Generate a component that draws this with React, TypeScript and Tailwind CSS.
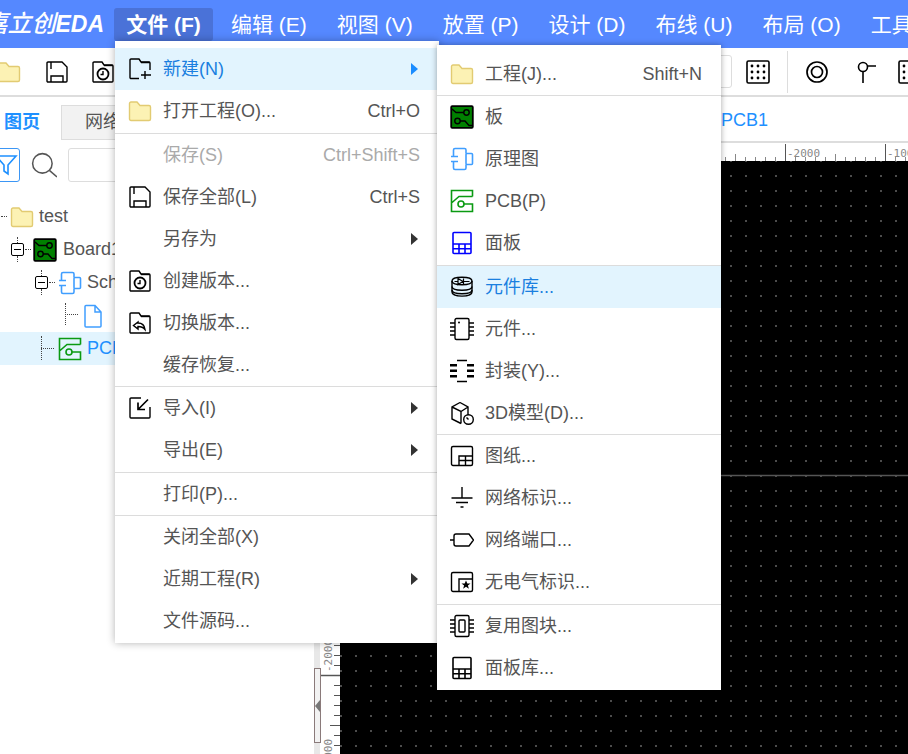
import React from "react";

const Svg = ({ children, className = "" }: { children: React.ReactNode; className?: string }) => (
  <svg viewBox="0 0 24 24" width="24" height="24" fill="none" stroke="#000" strokeWidth="1.4" className={"shrink-0 " + className}>
    {children}
  </svg>
);

const FolderIcon = () => (
  <Svg>
    <path d="M1.500 4.500a1.500 1.500 0 0 1 1.500-1.500h6l3 3.500h9a1.500 1.500 0 0 1 1.500 1.500v12a1.500 1.500 0 0 1-1.500 1.500H3a1.500 1.500 0 0 1-1.500-1.500z" fill="#fcf2b4" stroke="#e2cb72" />
  </Svg>
);
const SaveIcon = () => (
  <Svg>
    <path d="M3 2h14l5 5v14a1 1 0 0 1-1 1H3a1 1 0 0 1-1-1V3a1 1 0 0 1 1-1z" />
    <path d="M6 2v7M6 22v-6h12v6" />
  </Svg>
);
const NewIcon = () => (
  <Svg>
    <path d="M11 21.500H3a1 1 0 0 1-1-1V3a1 1 0 0 1 1-1h8l2 3h8a1 1 0 0 1 1 1v7" />
    <path d="M13 5.500h9M17 14v8M13 18h10" />
  </Svg>
);
const HistoryIcon = () => (
  <Svg>
    <path d="M3 2h8l2 3h8a1 1 0 0 1 1 1v15a1 1 0 0 1-1 1H3a1 1 0 0 1-1-1V3a1 1 0 0 1 1-1z" />
    <path d="M13 5.500h9" />
    <circle cx="12" cy="14" r="5.500" strokeWidth="1.800" />
    <path d="M12 11v3.500h-2.500" />
  </Svg>
);
const SwitchIcon = () => (
  <Svg>
    <path d="M3 2h8l2 3h8a1 1 0 0 1 1 1v15a1 1 0 0 1-1 1H3a1 1 0 0 1-1-1V3a1 1 0 0 1 1-1z" />
    <path d="M13 5.500h9" />
    <path d="M10 11l-4.500 3.500 4.500 3.500v-2.500c3 0 5 .5 7 3-.5-4-3-6.500-7-6.500z" />
  </Svg>
);
const ImportIcon = () => (
  <Svg>
    <path d="M13 2H3a1 1 0 0 0-1 1v18a1 1 0 0 0 1 1h18a1 1 0 0 0 1-1V11" />
    <path d="M20 3.500L10 13.500M10 6.500v7h7" strokeWidth="1.700" />
  </Svg>
);
const BoardIcon = () => (
  <Svg>
    <rect x="1.200" y="1.200" width="21.600" height="21.600" rx="1" fill="#008000" strokeWidth="1.800" />
    <path d="M2 4l4 3.500h8M10 16h5l4 4.500h3.500" />
    <circle cx="16.500" cy="7.500" r="2.700" />
    <circle cx="7.500" cy="16" r="2.700" />
  </Svg>
);
const SchIcon = () => (
  <Svg>
    <g stroke="#409eff" strokeWidth="1.600">
      <path d="M16 6.500V3a1.500 1.500 0 0 0-1.500-1.500H5A1.500 1.500 0 0 0 3.500 3v6.500M1 9.500h7M1 14.500h7M3.500 14.500V21A1.500 1.500 0 0 0 5 22.500h9.500A1.500 1.500 0 0 0 16 21v-3.500" />
      <rect x="16" y="6.500" width="6.500" height="11" rx="1" />
    </g>
  </Svg>
);
const PcbIcon = () => (
  <Svg>
    <g stroke="#0a9a12" strokeWidth="1.600">
      <path d="M22.500 7.500v-6H1.500v21h21V15H14M22.500 7.500H9L1.500 14" />
      <circle cx="11" cy="15" r="3" />
    </g>
  </Svg>
);
const PanelIcon = ({ c = "#0000ff" }: { c?: string }) => (
  <Svg>
    <g stroke={c} strokeWidth="1.600">
      <rect x="3" y="1.500" width="18" height="21" rx="1" />
      <path d="M3 13h18M3 17.700h18M9 13v9.500M15 13v9.500" />
    </g>
  </Svg>
);
const LibIcon = () => (
  <Svg>
    <path d="M2 6c0-5 20-5 20 0v11c0 5.500-20 5.500-20 0z" />
    <path d="M2 6c0 5 20 5 20 0M2 11.500c0 5 20 5 20 0M2 15c0 5 20 5 20 0" />
    <path d="M8 3.500l5 3-5 3zM13.500 3.500v6M4.500 6.500H8M13.500 6.500h6" strokeWidth="1.200" />
  </Svg>
);
const ChipIcon = () => (
  <Svg>
    <rect x="5" y="1.500" width="14" height="21" rx="1.500" />
    <circle cx="9" cy="5.500" r="1" fill="#000" stroke="none" />
    <path d="M0 6h5M0 10h5M0 14h5M0 18h5M19 6h5M19 10h5M19 14h5M19 18h5" />
  </Svg>
);
const FootprintIcon = () => (
  <Svg>
    <g fill="#000" stroke="none">
      <rect x="0" y="5" width="7" height="2.500" />
      <rect x="0" y="10.500" width="7" height="2.500" />
      <rect x="0" y="16" width="7" height="2.500" />
      <rect x="17" y="5" width="7" height="2.500" />
      <rect x="17" y="10.500" width="7" height="2.500" />
      <rect x="17" y="16" width="7" height="2.500" />
    </g>
    <path d="M7 1.500h10M7 22.500h10" />
  </Svg>
);
const Model3dIcon = () => (
  <Svg>
    <path d="M10 1.500l8 4.500v8M10 1.500L2 6v12l9 4.500M2 6l9 4.500 7-4.500M11 10.500v12" />
    <circle cx="18.500" cy="18.500" r="4.800" fill="#fff" />
    <path d="M18.500 18.500l-2-2" />
  </Svg>
);
const SheetIcon = () => (
  <Svg>
    <rect x="1.500" y="2.500" width="21" height="19" rx="1.500" />
    <path d="M9 21.500V12h13.500M9 16.500h13.500M15.500 12v9.500" />
  </Svg>
);
const NetFlagIcon = () => (
  <Svg>
    <path d="M12 1v11M1.500 12h21M6 16.500h12M10.500 21h3" />
  </Svg>
);
const NetPortIcon = () => (
  <Svg>
    <path d="M0 12h4M6 6h13l4.500 6-4.500 6H6a2 2 0 0 1-2-2V8a2 2 0 0 1 2-2z" />
  </Svg>
);
const NoErcIcon = () => (
  <Svg>
    <rect x="1.500" y="2.500" width="21" height="19" rx="1.500" />
    <path d="M9 21.500V9h13.500" />
    <path d="M16 10.500l1.300 3h3.200l-2.600 2 1 3.200-2.900-1.900-2.900 1.900 1-3.200-2.600-2h3.200z" fill="#000" stroke="none" />
  </Svg>
);
const BlockIcon = () => (
  <Svg>
    <rect x="5" y="1.500" width="14" height="21" rx="1.500" />
    <rect x="9" y="6" width="6" height="12" rx="1" />
    <path d="M0 6h5M0 10h5M0 14h5M0 18h5M19 6h5M19 10h5M19 14h5M19 18h5" />
  </Svg>
);
const DotsIcon = () => (
  <Svg>
    <rect x="1" y="1" width="22" height="22" rx="1.500" strokeWidth="1.600" />
    <g fill="#000" stroke="none">
      {[6, 12, 18].map((x) =>
        [6, 12, 18].map((y) => <circle key={x + "-" + y} cx={x} cy={y} r="1.400" />)
      )}
    </g>
  </Svg>
);
const RingIcon = () => (
  <Svg>
    <circle cx="12" cy="12" r="10" strokeWidth="1.700" />
    <circle cx="12" cy="12" r="5.500" strokeWidth="1.700" />
  </Svg>
);
const PinIcon = () => (
  <Svg>
    <circle cx="9" cy="7" r="4.500" strokeWidth="1.600" />
    <path d="M9 11.500V23M13.500 6H22" strokeWidth="1.600" />
  </Svg>
);
const FileIcon = () => (
  <Svg>
    <path d="M4 2.500a1 1 0 0 1 1-1h9l6 6.500v14a1 1 0 0 1-1 1H5a1 1 0 0 1-1-1zM14 1.500V8h6" stroke="#409eff" strokeWidth="1.500" />
  </Svg>
);

type Row = { icon?: React.ReactNode; text?: string; key?: string; sub?: boolean; on?: boolean; off?: boolean; sep?: string };

const mainRows: Row[] = [
  { icon: <NewIcon />, text: "新建(N)", sub: true, on: true },
  { icon: <FolderIcon />, text: "打开工程(O)...", key: "Ctrl+O" },
  { sep: "h-[2px]" },
  { text: "保存(S)", key: "Ctrl+Shift+S", off: true },
  { icon: <SaveIcon />, text: "保存全部(L)", key: "Ctrl+S" },
  { text: "另存为", sub: true },
  { icon: <HistoryIcon />, text: "创建版本..." },
  { icon: <SwitchIcon />, text: "切换版本..." },
  { text: "缓存恢复..." },
  { sep: "h-px" },
  { icon: <ImportIcon />, text: "导入(I)", sub: true },
  { text: "导出(E)", sub: true },
  { sep: "h-[2px]" },
  { text: "打印(P)..." },
  { sep: "h-px" },
  { text: "关闭全部(X)" },
  { text: "近期工程(R)", sub: true },
  { text: "文件源码..." },
];

const subRows: Row[] = [
  { icon: <FolderIcon />, text: "工程(J)...", key: "Shift+N" },
  { sep: "h-px" },
  { icon: <BoardIcon />, text: "板" },
  { icon: <SchIcon />, text: "原理图" },
  { icon: <PcbIcon />, text: "PCB(P)" },
  { icon: <PanelIcon />, text: "面板" },
  { sep: "h-[2px]" },
  { icon: <LibIcon />, text: "元件库...", on: true },
  { icon: <ChipIcon />, text: "元件..." },
  { icon: <FootprintIcon />, text: "封装(Y)..." },
  { icon: <Model3dIcon />, text: "3D模型(D)..." },
  { sep: "h-px" },
  { icon: <SheetIcon />, text: "图纸..." },
  { icon: <NetFlagIcon />, text: "网络标识..." },
  { icon: <NetPortIcon />, text: "网络端口..." },
  { icon: <NoErcIcon />, text: "无电气标识..." },
  { sep: "h-[2px]" },
  { icon: <BlockIcon />, text: "复用图块..." },
  { icon: <PanelIcon c="#000" />, text: "面板库..." },
];

const MenuRows = ({ rows }: { rows: Row[] }) => (
  <>
    {rows.map((r, i) =>
      r.sep ? (
        <div key={i} className={r.sep + " border-b border-[#dcdcdc]"} />
      ) : (
        <div
          key={i}
          className={
            "flex h-[42px] items-center pl-[13px] pr-[19px] text-[18px] " +
            (r.on ? "bg-[#e2f4fe] text-[#1a7fe0] " : "") +
            (r.off ? "text-[#aaaaaa] " : "") +
            (!r.on && !r.off ? "text-[#555555]" : "")
          }
        >
          <span className="flex w-[24px] shrink-0">{r.icon}</span>
          <span className="ml-[11px] flex-1 whitespace-nowrap">{r.text}</span>
          {r.key && <span className="whitespace-nowrap">{r.key}</span>}
          {r.sub && (
            <span
              className={
                "mr-[2px] h-0 w-0 border-y-[6px] border-l-[7px] border-y-transparent " +
                (r.on ? "border-l-[#1a8cff]" : "border-l-[#333333]")
              }
            />
          )}
        </div>
      )
    )}
  </>
);

const TopRuler = () => {
  const ticks = Array.from({ length: 57 }, (_, i) => 5 + i * 10);
  return (
    <svg width="568" height="18" className="block">
      {ticks.map((x) => {
        const big = (x - 45) % 100 === 0;
        const mid = (x + 5) % 100 === 0;
        return <line key={x} x1={x + 0.5} x2={x + 0.5} y1={big ? 1 : mid ? 11 : 14} y2={18} stroke={big ? "#555" : "#888"} />;
      })}
      <text x="447" y="14" fontFamily="DejaVu Sans Mono, monospace" fontSize="11" fill="#888">-2000</text>
      <text x="547" y="14" fontFamily="DejaVu Sans Mono, monospace" fontSize="11" fill="#888">-1000</text>
    </svg>
  );
};

const LeftRuler = () => {
  const ticks = Array.from({ length: 60 }, (_, i) => 4 + i * 10);
  return (
    <svg width="20" height="593" className="block">
      {ticks.map((y) => {
        const big = (y - 14) % 100 === 0;
        const mid = (y + 36) % 100 === 0;
        return <line key={y} x1={big ? 1 : mid ? 10 : 14} x2={20} y1={y + 0.5} y2={y + 0.5} stroke="#555" strokeWidth={big ? 1.500 : 1} />;
      })}
      <text transform="translate(12 511) rotate(-90)" fontFamily="DejaVu Sans Mono, monospace" fontSize="11" fill="#888">-2000</text>
      <text transform="translate(12 611) rotate(-90)" fontFamily="DejaVu Sans Mono, monospace" fontSize="11" fill="#888">-1000</text>
    </svg>
  );
};

const Dotted = ({ className }: { className: string }) => <span className={"absolute border-dotted border-[#444444] " + className} />;

const Toggle = () => (
  <span className="relative flex h-[13px] w-[13px] shrink-0 items-center justify-center rounded-[2px] border border-black bg-white">
    <span className="h-px w-[7px] bg-black" />
    <Dotted className="left-[5px] top-[-7px] h-[6px] border-l" />
    <Dotted className="left-[5px] top-[12px] h-[6px] border-l" />
    <Dotted className="left-[13px] top-[5px] w-[6px] border-t" />
  </span>
);

export default function App() {
  return (
    <div className="relative h-[754px] w-[908px] overflow-hidden bg-white font-['Liberation_Sans','Noto_Sans_CJK_SC',sans-serif]">
      {/* top menu bar */}
      <div className="flex h-12 items-center bg-[#5588ff] text-[21px] leading-none text-white">
        <div className="flex h-full w-[104px] shrink-0 items-center justify-end overflow-hidden whitespace-nowrap text-[24px] font-medium italic">
          嘉立创<span className="text-[23px] font-bold">EDA</span>
        </div>
        <div className="ml-[10px] flex h-[33px] w-[99px] shrink-0 items-center justify-center whitespace-nowrap rounded-[3px] bg-[#4a72d8] font-bold">
          文件 (F)
        </div>
        {["编辑 (E)", "视图 (V)", "放置 (P)", "设计 (D)", "布线 (U)", "布局 (O)", "工具 (T)"].map((m) => (
          <div key={m} className="ml-[6px] shrink-0 whitespace-nowrap px-3 pt-px">
            {m}
          </div>
        ))}
      </div>

      {/* toolbar */}
      <div className="flex h-[49px] items-center border-b-2 border-[#dddddd]">
        <div className="ml-[-3px] flex">
          <FolderIcon />
        </div>
        <div className="ml-[24px] flex">
          <SaveIcon />
        </div>
        <div className="ml-[22px] flex">
          <HistoryIcon />
        </div>
        <div className="ml-[497px] h-[33px] w-[120px] shrink-0 rounded-[3px] border border-[#dddddd]" />
        <div className="ml-[14px] flex">
          <DotsIcon />
        </div>
        <div className="ml-[17px] h-[42px] w-px shrink-0 bg-[#dddddd]" />
        <div className="ml-[17px] flex">
          <RingIcon />
        </div>
        <div className="ml-[25px] flex">
          <PinIcon />
        </div>
        <div className="ml-[20px] flex">
          <DotsIcon />
        </div>
      </div>

      <div className="flex h-[657px]">
        {/* left panel */}
        <div className="flex w-[314px] shrink-0 flex-col">
          <div className="flex h-[43px] items-end">
            <div className="flex h-[35px] w-[61px] items-center pl-[4px] text-[18px] font-bold text-[#1e90ff]">图页</div>
            <div className="flex h-[35px] flex-1 items-center border border-r-0 border-[#dddddd] bg-[#f2f2f2] pl-[23px] text-[18px] text-[#555555]">网络</div>
          </div>
          <div className="flex h-[42px] items-center pt-[7px]">
            <div className="ml-[-12px] flex h-[34px] w-[32px] items-center justify-center rounded-[3px] border border-[#3b96f5]">
              <svg viewBox="0 0 24 24" width="24" height="24" fill="none" stroke="#1e90ff" strokeWidth="1.600" className="ml-[6px]">
                <path d="M1 3h20l-8 9v9l-4-3v-6z" />
              </svg>
            </div>
            <svg viewBox="0 0 24 24" width="26" height="26" fill="none" stroke="#555" strokeWidth="1.400" className="ml-[11px]">
              <circle cx="10.500" cy="10.500" r="9" />
              <path d="M17 17l7 6" />
            </svg>
            <div className="ml-[11px] h-[34px] w-[120px] rounded-[3px] border border-[#dddddd]" />
          </div>
          <div className="mt-[18px] text-[18px] text-[#555555]">
            <div className="relative flex h-[33px] items-center pl-[10px]">
              <Dotted className="left-[1px] top-[16px] w-[6px] border-t" />
              <FolderIcon />
              <span className="ml-[5px]">test</span>
            </div>
            <div className="flex h-[33px] items-center pl-[11px]">
              <Toggle />
              <span className="ml-[9px] flex">
                <BoardIcon />
              </span>
              <span className="ml-[6px] whitespace-nowrap">Board1</span>
            </div>
            <div className="flex h-[33px] items-center pl-[35px]">
              <Toggle />
              <span className="ml-[10px] flex">
                <SchIcon />
              </span>
              <span className="ml-[5px] whitespace-nowrap">Schematic1</span>
            </div>
            <div className="relative flex h-[33px] items-center pl-[81px]">
              <Dotted className="left-[65px] top-[4px] h-[22px] border-l" />
              <Dotted className="left-[65px] top-[15px] w-[13px] border-t" />
              <FileIcon />
            </div>
            <div className="relative flex h-[33px] items-center bg-[#e2f4fe] pl-[58px] text-[#1e90ff]">
              <Dotted className="left-[41px] top-[4px] h-[24px] border-l" />
              <Dotted className="left-[41px] top-[16px] w-[13px] border-t" />
              <PcbIcon />
              <span className="ml-[5px] whitespace-nowrap">PCB1</span>
            </div>
          </div>
        </div>

        {/* canvas area */}
        <div className="flex min-w-0 flex-1 flex-col">
          <div className="flex h-[46px] shrink-0 items-center justify-end border-b-2 border-[#dddddd] pt-[2px] pr-[140px] text-[18px] text-[#1e90ff]">PCB1</div>
          <div className="flex h-[18px] shrink-0 overflow-hidden pl-[26px]">
            <TopRuler />
          </div>
          <div className="flex min-h-0 flex-1">
            <div className="relative flex h-full w-[26px] shrink-0 justify-end overflow-hidden">
              <LeftRuler />
              <div className="absolute inset-y-0 left-0 w-[6px] bg-[#e8e8e8]" />
              <div className="absolute left-0 top-[507px] flex h-[75px] w-[7px] items-center border border-[#8a7a7a] bg-[#f2f2f2]">
                <span className="h-0 w-0 border-y-[6px] border-r-[5px] border-y-transparent border-r-[#777777]" />
              </div>
            </div>
            <div className="relative flex-1 overflow-hidden bg-black">
              <svg width="568" height="593" className="block">
                <defs>
                  <pattern id="grid" x="0" y="14" width="15" height="15" patternUnits="userSpaceOnUse">
                    <rect x="0" y="0" width="2" height="2" fill="#4c4c4c" />
                  </pattern>
                </defs>
                <rect width="568" height="593" fill="url(#grid)" />
                <line x1="0" x2="568" y1="314.500" y2="314.500" stroke="#555" strokeWidth="1.500" />
              </svg>
            </div>
          </div>
        </div>
      </div>

      {/* file menu */}
      <div className="absolute left-[115px] top-[41px] h-[602px] w-[324px] bg-white pt-[7px] shadow-[0_0_8px_rgba(0,0,0,0.3)]">
        <MenuRows rows={mainRows} />
      </div>

      {/* new submenu */}
      <div className="absolute left-[437px] top-[45px] h-[645px] w-[284px] bg-white pt-[8px] shadow-[0_0_6px_rgba(0,0,0,0.35)]">
        <MenuRows rows={subRows} />
      </div>
    </div>
  );
}
